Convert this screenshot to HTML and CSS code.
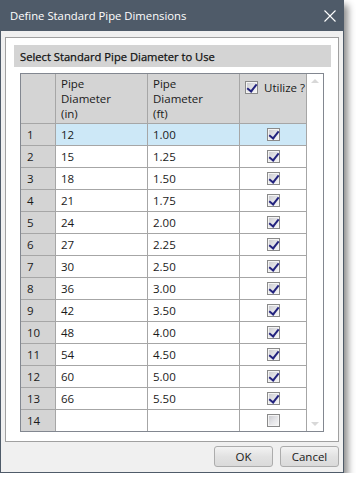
FILE: index.html
```html
<!DOCTYPE html>
<html lang="en">
<head>
    <meta charset="UTF-8">
    <title>Define Standard Pipe Dimensions</title>
    <link rel="stylesheet" href="styles.css">
</head>
<body>
    <div class="window">
        <div class="titlebar">
            <span class="title">Define Standard Pipe Dimensions</span>
            <svg class="close" width="12" height="12" viewBox="0 0 12 12">
                <path d="M0.5 0.5 L11.5 11.5 M11.5 0.5 L0.5 11.5" stroke="#ffffff" stroke-width="1.1" fill="none"/>
            </svg>
        </div>

        <div class="dialog-body">
            <div class="panel">
                <div class="panel-head">Select Standard Pipe Diameter to Use</div>

                <div class="grid-wrap">
                    <div class="grid">
                        <div class="hd"></div>
                        <div class="hd">Pipe<br>Diameter<br>(in)</div>
                        <div class="hd">Pipe<br>Diameter<br>(ft)</div>
                        <div class="hd hd-util"><span class="cb on"></span>Utilize ?</div>

                        <div class="rh">1</div><div class="cell sel">12</div><div class="cell sel">1.00</div><div class="cell sel chk"><span class="cb on"></span></div>
                        <div class="rh">2</div><div class="cell">15</div><div class="cell">1.25</div><div class="cell chk"><span class="cb on"></span></div>
                        <div class="rh">3</div><div class="cell">18</div><div class="cell">1.50</div><div class="cell chk"><span class="cb on"></span></div>
                        <div class="rh">4</div><div class="cell">21</div><div class="cell">1.75</div><div class="cell chk"><span class="cb on"></span></div>
                        <div class="rh">5</div><div class="cell">24</div><div class="cell">2.00</div><div class="cell chk"><span class="cb on"></span></div>
                        <div class="rh">6</div><div class="cell">27</div><div class="cell">2.25</div><div class="cell chk"><span class="cb on"></span></div>
                        <div class="rh">7</div><div class="cell">30</div><div class="cell">2.50</div><div class="cell chk"><span class="cb on"></span></div>
                        <div class="rh">8</div><div class="cell">36</div><div class="cell">3.00</div><div class="cell chk"><span class="cb on"></span></div>
                        <div class="rh">9</div><div class="cell">42</div><div class="cell">3.50</div><div class="cell chk"><span class="cb on"></span></div>
                        <div class="rh">10</div><div class="cell">48</div><div class="cell">4.00</div><div class="cell chk"><span class="cb on"></span></div>
                        <div class="rh">11</div><div class="cell">54</div><div class="cell">4.50</div><div class="cell chk"><span class="cb on"></span></div>
                        <div class="rh">12</div><div class="cell">60</div><div class="cell">5.00</div><div class="cell chk"><span class="cb on"></span></div>
                        <div class="rh">13</div><div class="cell">66</div><div class="cell">5.50</div><div class="cell chk"><span class="cb on"></span></div>
                        <div class="rh">14</div><div class="cell"></div><div class="cell"></div><div class="cell chk"><span class="cb"></span></div>
                    </div>

                    <div class="scrollbar">
                        <span class="arrow up"></span>
                        <span class="arrow down"></span>
                    </div>
                </div>
            </div>

            <div class="buttons">
                <button class="btn">OK</button>
                <button class="btn">Cancel</button>
            </div>
        </div>
    </div>
</body>
</html>
```

FILE: styles.css
```css
* {
    margin: 0;
    padding: 0;
    box-sizing: border-box;
}

body {
    font-family: 'Open Sans', 'Noto Sans', sans-serif;
    font-size: 11.5px;
    color: #1a1a1a;
    background: #ffffff;
}

.window {
    width: 344px;
    border: 1px solid #4f5b69;
    background: #f0f0f0;
    box-shadow: 4px 5px 7px rgba(0, 0, 0, 0.45);
    display: flex;
    flex-direction: column;
}

.titlebar {
    height: 30px;
    background: #4f5b69;
    display: flex;
    align-items: center;
    justify-content: space-between;
    padding: 0 7px 1px 9px;
}

.title {
    color: #ffffff;
    font-size: 11.3px;
}

.dialog-body {
    padding: 6px 4px 5px 4px;
}

.panel {
    background: #ffffff;
    border: 1px solid #a0a0a0;
    padding: 7px 7px 9px 8px;
}

.panel-head {
    height: 22px;
    background: #d4d4d4;
    padding-left: 6px;
    display: flex;
    align-items: center;
    font-size: 11.2px;
    color: #111111;
    -webkit-text-stroke: 0.25px #111111;
}

.grid-wrap {
    margin: 6px 7px 0 6px;
    border: 1px solid #828790;
    display: flex;
}

.grid {
    display: grid;
    grid-template-columns: 34px 91px 91px 66px;
    grid-template-rows: 49px;
    grid-auto-rows: 21px;
    gap: 1px;
    background: #a6a6a6;
}

.hd {
    background: #d4d4d4;
    padding: 2px 0 0 5px;
    line-height: 15px;
}

.hd-util {
    display: flex;
    align-items: flex-start;
    padding: 7px 0 0 5px;
    gap: 6px;
    line-height: 14px;
}

.rh {
    background: #d4d4d4;
    padding-left: 6px;
    display: flex;
    align-items: center;
}

.cell {
    background: #ffffff;
    padding-left: 5px;
    display: flex;
    align-items: center;
}

.cell.sel {
    background: #cde8f7;
}

.cell.chk {
    justify-content: center;
    padding-left: 0;
}

.cb {
    width: 13px;
    height: 13px;
    flex: none;
    border: 1px solid #8a8a8a;
    background: linear-gradient(135deg, #c6c7cc 0%, #e6e6e9 55%, #f7f7f7 100%);
    box-shadow: inset 0 0 0 1px #f4f4f4;
    position: relative;
}

.cb.on::after {
    content: "";
    position: absolute;
    left: 3px;
    top: 0;
    width: 4px;
    height: 8px;
    border: solid #23237e;
    border-width: 0 2px 2px 0;
    transform: rotate(38deg);
}

.scrollbar {
    width: 17px;
    border-left: 1px solid #a6a6a6;
    background: #ffffff;
    display: flex;
    flex-direction: column;
    justify-content: space-between;
    align-items: center;
    padding: 5px 0 5px 0;
}

.arrow {
    width: 0;
    height: 0;
    border-left: 4px solid transparent;
    border-right: 4px solid transparent;
}

.arrow.up {
    border-bottom: 4px solid #d8d8d8;
}

.arrow.down {
    border-top: 4px solid #d8d8d8;
}

.buttons {
    display: flex;
    justify-content: flex-end;
    gap: 7px;
    padding-top: 4px;
}

.btn {
    width: 59px;
    height: 21px;
    font-family: inherit;
    font-size: 11.5px;
    color: #1a1a1a;
    border: 1px solid #acacac;
    border-radius: 3px;
    background: linear-gradient(#f3f3f3, #e2e2e2 50%, #dadada);
}
```
